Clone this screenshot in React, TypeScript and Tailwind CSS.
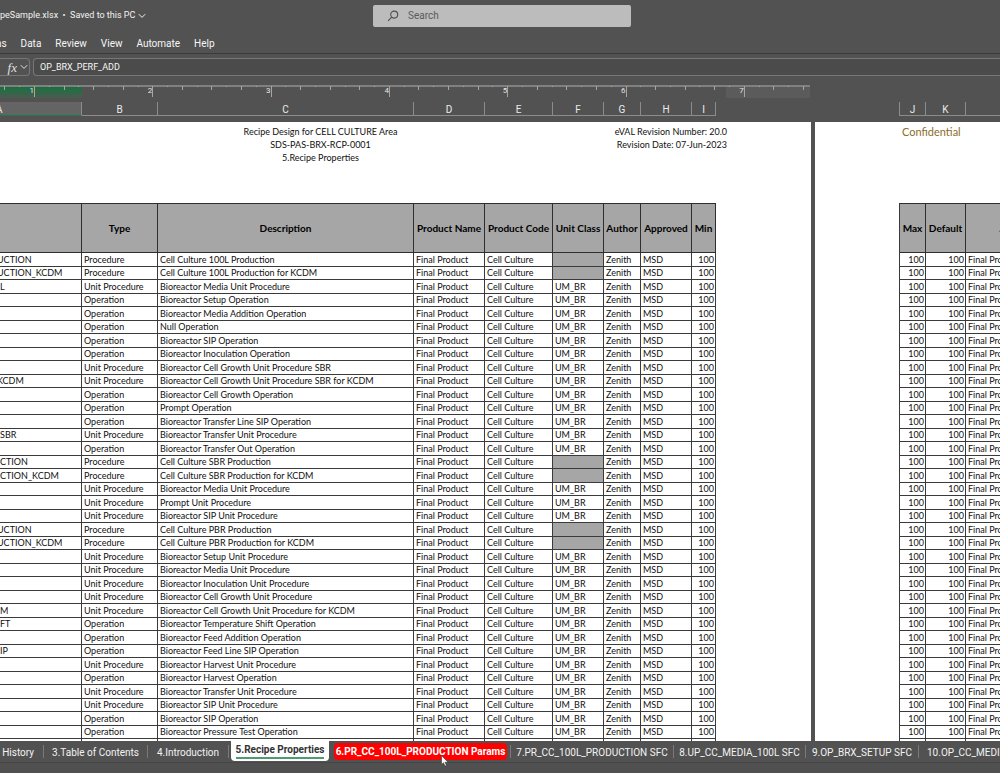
import React from "react";

type Row = [name: string, type: string, description: string, unitClass: boolean];

const P = "Procedure";
const U = "Unit Procedure";
const O = "Operation";

const rows: Row[] = [
  ["UCTION", P, "Cell Culture 100L Production", false],
  ["UCTION_KCDM", P, "Cell Culture 100L Production for KCDM", false],
  ["L", U, "Bioreactor Media Unit Procedure", true],
  ["", O, "Bioreactor Setup Operation", true],
  ["", O, "Bioreactor Media Addition Operation", true],
  ["", O, "Null Operation", true],
  ["", O, "Bioreactor SIP Operation", true],
  ["", O, "Bioreactor Inoculation Operation", true],
  ["", U, "Bioreactor Cell Growth Unit Procedure SBR", true],
  ["KCDM", U, "Bioreactor Cell Growth Unit Procedure SBR for KCDM", true],
  ["", O, "Bioreactor Cell Growth Operation", true],
  ["", O, "Prompt Operation", true],
  ["", O, "Bioreactor Transfer Line SIP Operation", true],
  ["SBR", U, "Bioreactor Transfer Unit Procedure", true],
  ["", O, "Bioreactor Transfer Out Operation", true],
  ["CTION", P, "Cell Culture SBR Production", false],
  ["CTION_KCDM", P, "Cell Culture SBR Production for KCDM", false],
  ["", U, "Bioreactor Media Unit Procedure", true],
  ["", U, "Prompt Unit Procedure", true],
  ["", U, "Bioreactor SIP Unit Procedure", true],
  ["UCTION", P, "Cell Culture PBR Production", false],
  ["UCTION_KCDM", P, "Cell Culture PBR Production for KCDM", false],
  ["", U, "Bioreactor Setup Unit Procedure", true],
  ["", U, "Bioreactor Media Unit Procedure", true],
  ["", U, "Bioreactor Inoculation Unit Procedure", true],
  ["", U, "Bioreactor Cell Growth Unit Procedure", true],
  ["M", U, "Bioreactor Cell Growth Unit Procedure for KCDM", true],
  ["FT", O, "Bioreactor Temperature Shift Operation", true],
  ["", O, "Bioreactor Feed Addition Operation", true],
  ["IP", O, "Bioreactor Feed Line SIP Operation", true],
  ["", U, "Bioreactor Harvest Unit Procedure", true],
  ["", O, "Bioreactor Harvest Operation", true],
  ["", U, "Bioreactor Transfer Unit Procedure", true],
  ["", U, "Bioreactor SIP Unit Procedure", true],
  ["", O, "Bioreactor SIP Operation", true],
  ["", O, "Bioreactor Pressure Test Operation", true],
];

const leftColumns = [
  { letter: "A", title: "", width: "w-[82px]" },
  { letter: "B", title: "Type", width: "w-[76px]" },
  { letter: "C", title: "Description", width: "w-[256px]" },
  { letter: "D", title: "Product Name", width: "w-[71px]" },
  { letter: "E", title: "Product Code", width: "w-[68px]" },
  { letter: "F", title: "Unit Class", width: "w-[51px]" },
  { letter: "G", title: "Author", width: "w-[37px]" },
  { letter: "H", title: "Approved", width: "w-[51px]" },
  { letter: "I", title: "Min", width: "w-[24px]" },
];

const cell = "overflow-hidden border-r border-b border-[#3a3a3a] p-0 pl-[2px] whitespace-nowrap";
const nameCell = "overflow-hidden border-r border-b border-[#3a3a3a] p-0 whitespace-nowrap";
const head = "h-[50px] border-r border-b border-t border-[#2e2e2e] bg-[#a6a6a6] p-0 text-center text-[10px] font-bold text-black whitespace-nowrap";
const table = "table-fixed border-separate border-spacing-0 text-[9px] leading-[12px] text-[#101010]";
const rowHeight = "h-[13px] odd:h-[14px]";

function Chevron() {
  return (
    <svg viewBox="0 0 8 8" className="size-2" fill="none" stroke="currentColor" strokeWidth="1">
      <path d="M0.8 2.2 4 5.4 7.2 2.2" />
    </svg>
  );
}

function TitleBar() {
  return (
    <header className="grid h-[31px] shrink-0 grid-cols-[373px_258px_1fr] items-center">
      <button className="flex items-center gap-[3px] text-[9px] whitespace-nowrap text-[#f2f2f2]">
        <span>peSample.xlsx&nbsp; •&nbsp; Saved to this PC</span>
        <Chevron />
      </button>
      <label className="flex h-[22px] items-center gap-[9px] rounded-xs bg-[#bcbcbc] pl-[14px] text-[#505050]">
        <svg viewBox="0 0 12 12" className="size-3 shrink-0" fill="none" stroke="currentColor" strokeWidth="1.1">
          <circle cx="7.2" cy="4.6" r="3.5" />
          <path d="M4.7 7.1 1 10.9" />
        </svg>
        <input aria-label="Search" placeholder="Search" className="w-full min-w-0 bg-transparent text-[10px] outline-none placeholder:text-[#5a5a5a]" />
      </label>
    </header>
  );
}

function MenuBar() {
  return (
    <nav className="flex h-[23px] shrink-0 items-center gap-[14px] border-b border-[#3a3a3a] pt-[2px] text-[10px] text-[#f6f6f6]">
      {["as", "Data", "Review", "View", "Automate", "Help"].map((item) => (
        <button key={item} className="first:-ml-1">
          {item}
        </button>
      ))}
    </nav>
  );
}

function FormulaBar() {
  return (
    <div className="mt-1 flex h-[18px] shrink-0 gap-[3px]">
      <button aria-label="Insert function" className="flex w-[30px] items-center justify-end gap-[3px] rounded-r-sm border border-l-0 border-[#777] pr-px text-[#e0e0e0]">
        <span className="font-['Liberation_Serif',serif] text-[13px] leading-none italic">fx</span>
        <Chevron />
      </button>
      <input
        aria-label="Formula"
        defaultValue="OP_BRX_PERF_ADD"
        className="min-w-0 flex-1 rounded-l-sm border border-r-0 border-[#777] bg-[#4b4b4b] pt-[2px] pl-[6px] text-[9px] text-[#f6f6f6] outline-none"
      />
    </div>
  );
}

function Ruler() {
  const inch = 118.3;
  const ticks = Array.from({ length: 56 }, (_, i) => ({ x: 34.5 + (i - 2) * (inch / 8), step: (i - 2 + 8) % 8 })).filter((t) => t.x < 810);
  return (
    <svg className="mt-[9px] h-[13px] w-[810px] shrink-0" viewBox="0 0 810 13" aria-hidden="true">
      <defs>
        <linearGradient id="selection" x1="0" y1="0" x2="0" y2="1">
          <stop offset="0" stopColor="#12703a" />
          <stop offset="0.4" stopColor="#2a6a45" />
          <stop offset="1" stopColor="#4d5a51" />
        </linearGradient>
      </defs>
      <rect x="0" y="1" width="82" height="12" fill="url(#selection)" />
      <rect x="726" y="1" width="84" height="12" fill="#5b5b5b" />
      <rect x="0" y="0" width="810" height="2" fill="#808080" />
      {ticks.map(({ x, step }) => (
        <rect key={x} x={Math.round(x - 0.5)} y="1" width="1" height={step === 0 ? 11 : step % 2 === 0 ? 4 : 1} fill="#a5a5a5" />
      ))}
      {[1, 2, 3, 4, 5, 6, 7].map((n) => (
        <text key={n} x={34 + (n - 1) * inch} y="8" textAnchor="end" fontSize="8" fill="#e6e6e6">
          {n}
        </text>
      ))}
    </svg>
  );
}

function ColumnLetters() {
  const base = "flex shrink-0 items-center justify-center border-r border-b border-[#8c8c8c] pt-[2px]";
  return (
    <div className="mt-1 mb-[6px] flex h-[14px] shrink-0 text-[10px] leading-[12px] text-[#ececec]">
      {leftColumns.map(({ letter, width }) =>
        letter === "A" ? (
          <div key={letter} className={`${width} flex shrink-0 items-center border-r border-b border-r-[#8c8c8c] border-b-[#1f7a47] bg-[#646464] pt-[2px]`}>
            <span className="-ml-1">A</span>
          </div>
        ) : (
          <div key={letter} className={`${width} ${base}`}>
            {letter}
          </div>
        ),
      )}
      <div className="ml-[183px] flex flex-1 border-l border-[#8c8c8c]">
        <div className={`w-[26px] ${base}`}>J</div>
        <div className={`w-[40px] ${base}`}>K</div>
        <div className="flex-1 border-b border-[#8c8c8c]" />
      </div>
    </div>
  );
}

function LeftPage() {
  return (
    <section className="w-[811px] shrink-0 bg-white">
      <div className="grid h-[81px] w-[727px] grid-cols-[116px_1fr_202px] pt-[3px] text-[9px] leading-[13px] text-[#101010]">
        <div className="col-start-2 text-center">
          <p>Recipe Design for CELL CULTURE Area</p>
          <p>SDS-PAS-BRX-RCP-0001</p>
          <p>5.Recipe Properties</p>
        </div>
        <div className="text-right">
          <p>eVAL Revision Number: 20.0</p>
          <p>Revision Date: 07-Jun-2023</p>
        </div>
      </div>
      <table className={`${table} w-[716px]`}>
        <colgroup>
          {leftColumns.map((c) => (
            <col key={c.letter} className={c.width} />
          ))}
        </colgroup>
        <thead>
          <tr>
            {leftColumns.map((c) => (
              <th key={c.letter} className={head}>
                {c.title}
              </th>
            ))}
          </tr>
        </thead>
        <tbody>
          {rows.map(([name, type, description, unitClass], i) => (
            <tr key={i} className={rowHeight}>
              <td className={/^[UK]/.test(name) ? `${nameCell} indent-[-3px]` : nameCell}>{name}</td>
              <td className={cell}>{type}</td>
              <td className={cell}>{description}</td>
              <td className={cell}>Final Product</td>
              <td className={cell}>Cell Culture</td>
              <td className={unitClass ? cell : `${cell} bg-[#a6a6a6]`}>{unitClass ? "UM_BR" : ""}</td>
              <td className={cell}>Zenith</td>
              <td className={cell}>MSD</td>
              <td className={`${cell} pr-px text-right`}>100</td>
            </tr>
          ))}
          <tr className={rowHeight}>
            {leftColumns.map((c) => (
              <td key={c.letter} className={cell} />
            ))}
          </tr>
        </tbody>
      </table>
    </section>
  );
}

function RightPage() {
  return (
    <section className="min-w-0 flex-1 overflow-hidden bg-white pl-[84px]">
      <p className="h-[81px] pt-[3px] pl-[3px] text-[11px] leading-[14px] text-[#8a6d2b]">Confidential</p>
      <table className={`${table} w-[156px] border-l border-[#3a3a3a]`}>
        <colgroup>
          <col className="w-[26px]" />
          <col className="w-[40px]" />
          <col />
        </colgroup>
        <thead>
          <tr>
            <th className={head}>Max</th>
            <th className={head}>Default</th>
            <th className={head}>Area</th>
          </tr>
        </thead>
        <tbody>
          {rows.map((_, i) => (
            <tr key={i} className={rowHeight}>
              <td className={`${cell} pr-px text-right`}>100</td>
              <td className={`${cell} pr-px text-right`}>100</td>
              <td className={cell}>Final Product</td>
            </tr>
          ))}
          <tr className={rowHeight}>
            <td className={cell} />
            <td className={cell} />
            <td className={cell} />
          </tr>
        </tbody>
      </table>
    </section>
  );
}

function SheetTabs() {
  const tab = "h-[13px] shrink-0 border-r border-[#7a7a7a] text-center leading-[15px]";
  return (
    <nav className="flex h-[22px] shrink-0 items-center overflow-hidden border-b border-[#474747] text-[10px] whitespace-nowrap text-[#f2f2f2]">
      <button className={`${tab} w-[44px] pr-[9px] text-right`}>History</button>
      <button className={`${tab} w-[104px]`}>3.Table of Contents</button>
      <button className={`${tab} w-[81px]`}>4.Introduction</button>
      <button className="ml-[2px] flex h-5 w-[98px] shrink-0 justify-center self-start rounded-b-sm bg-white font-bold text-[#333]">
        <span className="h-[18px] border-b-2 border-[#4f9a72] leading-[18px]">5.Recipe Properties</span>
      </button>
      <button className="ml-[5px] h-[17px] w-[173px] shrink-0 rounded-sm bg-[#fe0000] leading-[18px] font-bold text-white">
        6.PR_CC_100L_PRODUCTION Params
      </button>
      <div className="h-[13px] w-1 shrink-0 border-r border-[#7a7a7a]" />
      <button className={`${tab} w-[163px]`}>7.PR_CC_100L_PRODUCTION SFC</button>
      <button className={`${tab} w-[132px]`}>8.UP_CC_MEDIA_100L SFC</button>
      <button className={`${tab} w-[113px]`}>9.OP_BRX_SETUP SFC</button>
      <button className="h-[13px] shrink-0 pl-2 leading-[15px]">10.OP_CC_MEDIA_ADD SFC</button>
    </nav>
  );
}

export default function App() {
  return (
    <div className="relative flex h-screen flex-col overflow-hidden bg-[#525252] font-[Roboto,sans-serif]">
      <TitleBar />
      <MenuBar />
      <FormulaBar />
      <Ruler />
      <ColumnLetters />
      <main className="flex min-h-0 flex-1 gap-1 overflow-hidden font-[Lato,sans-serif]">
        <LeftPage />
        <RightPage />
      </main>
      <SheetTabs />
      <footer className="h-[10px] shrink-0 bg-[#505050]" />
      <svg viewBox="0 0 8 12" className="absolute top-[755px] left-[441px] h-3 w-2" aria-hidden="true">
        <path d="M0.5 0.5v9l2-1.8 1.4 3.4 1.6-.7-1.4-3.2h3z" fill="#fff" stroke="#333" strokeWidth="0.6" />
      </svg>
    </div>
  );
}
